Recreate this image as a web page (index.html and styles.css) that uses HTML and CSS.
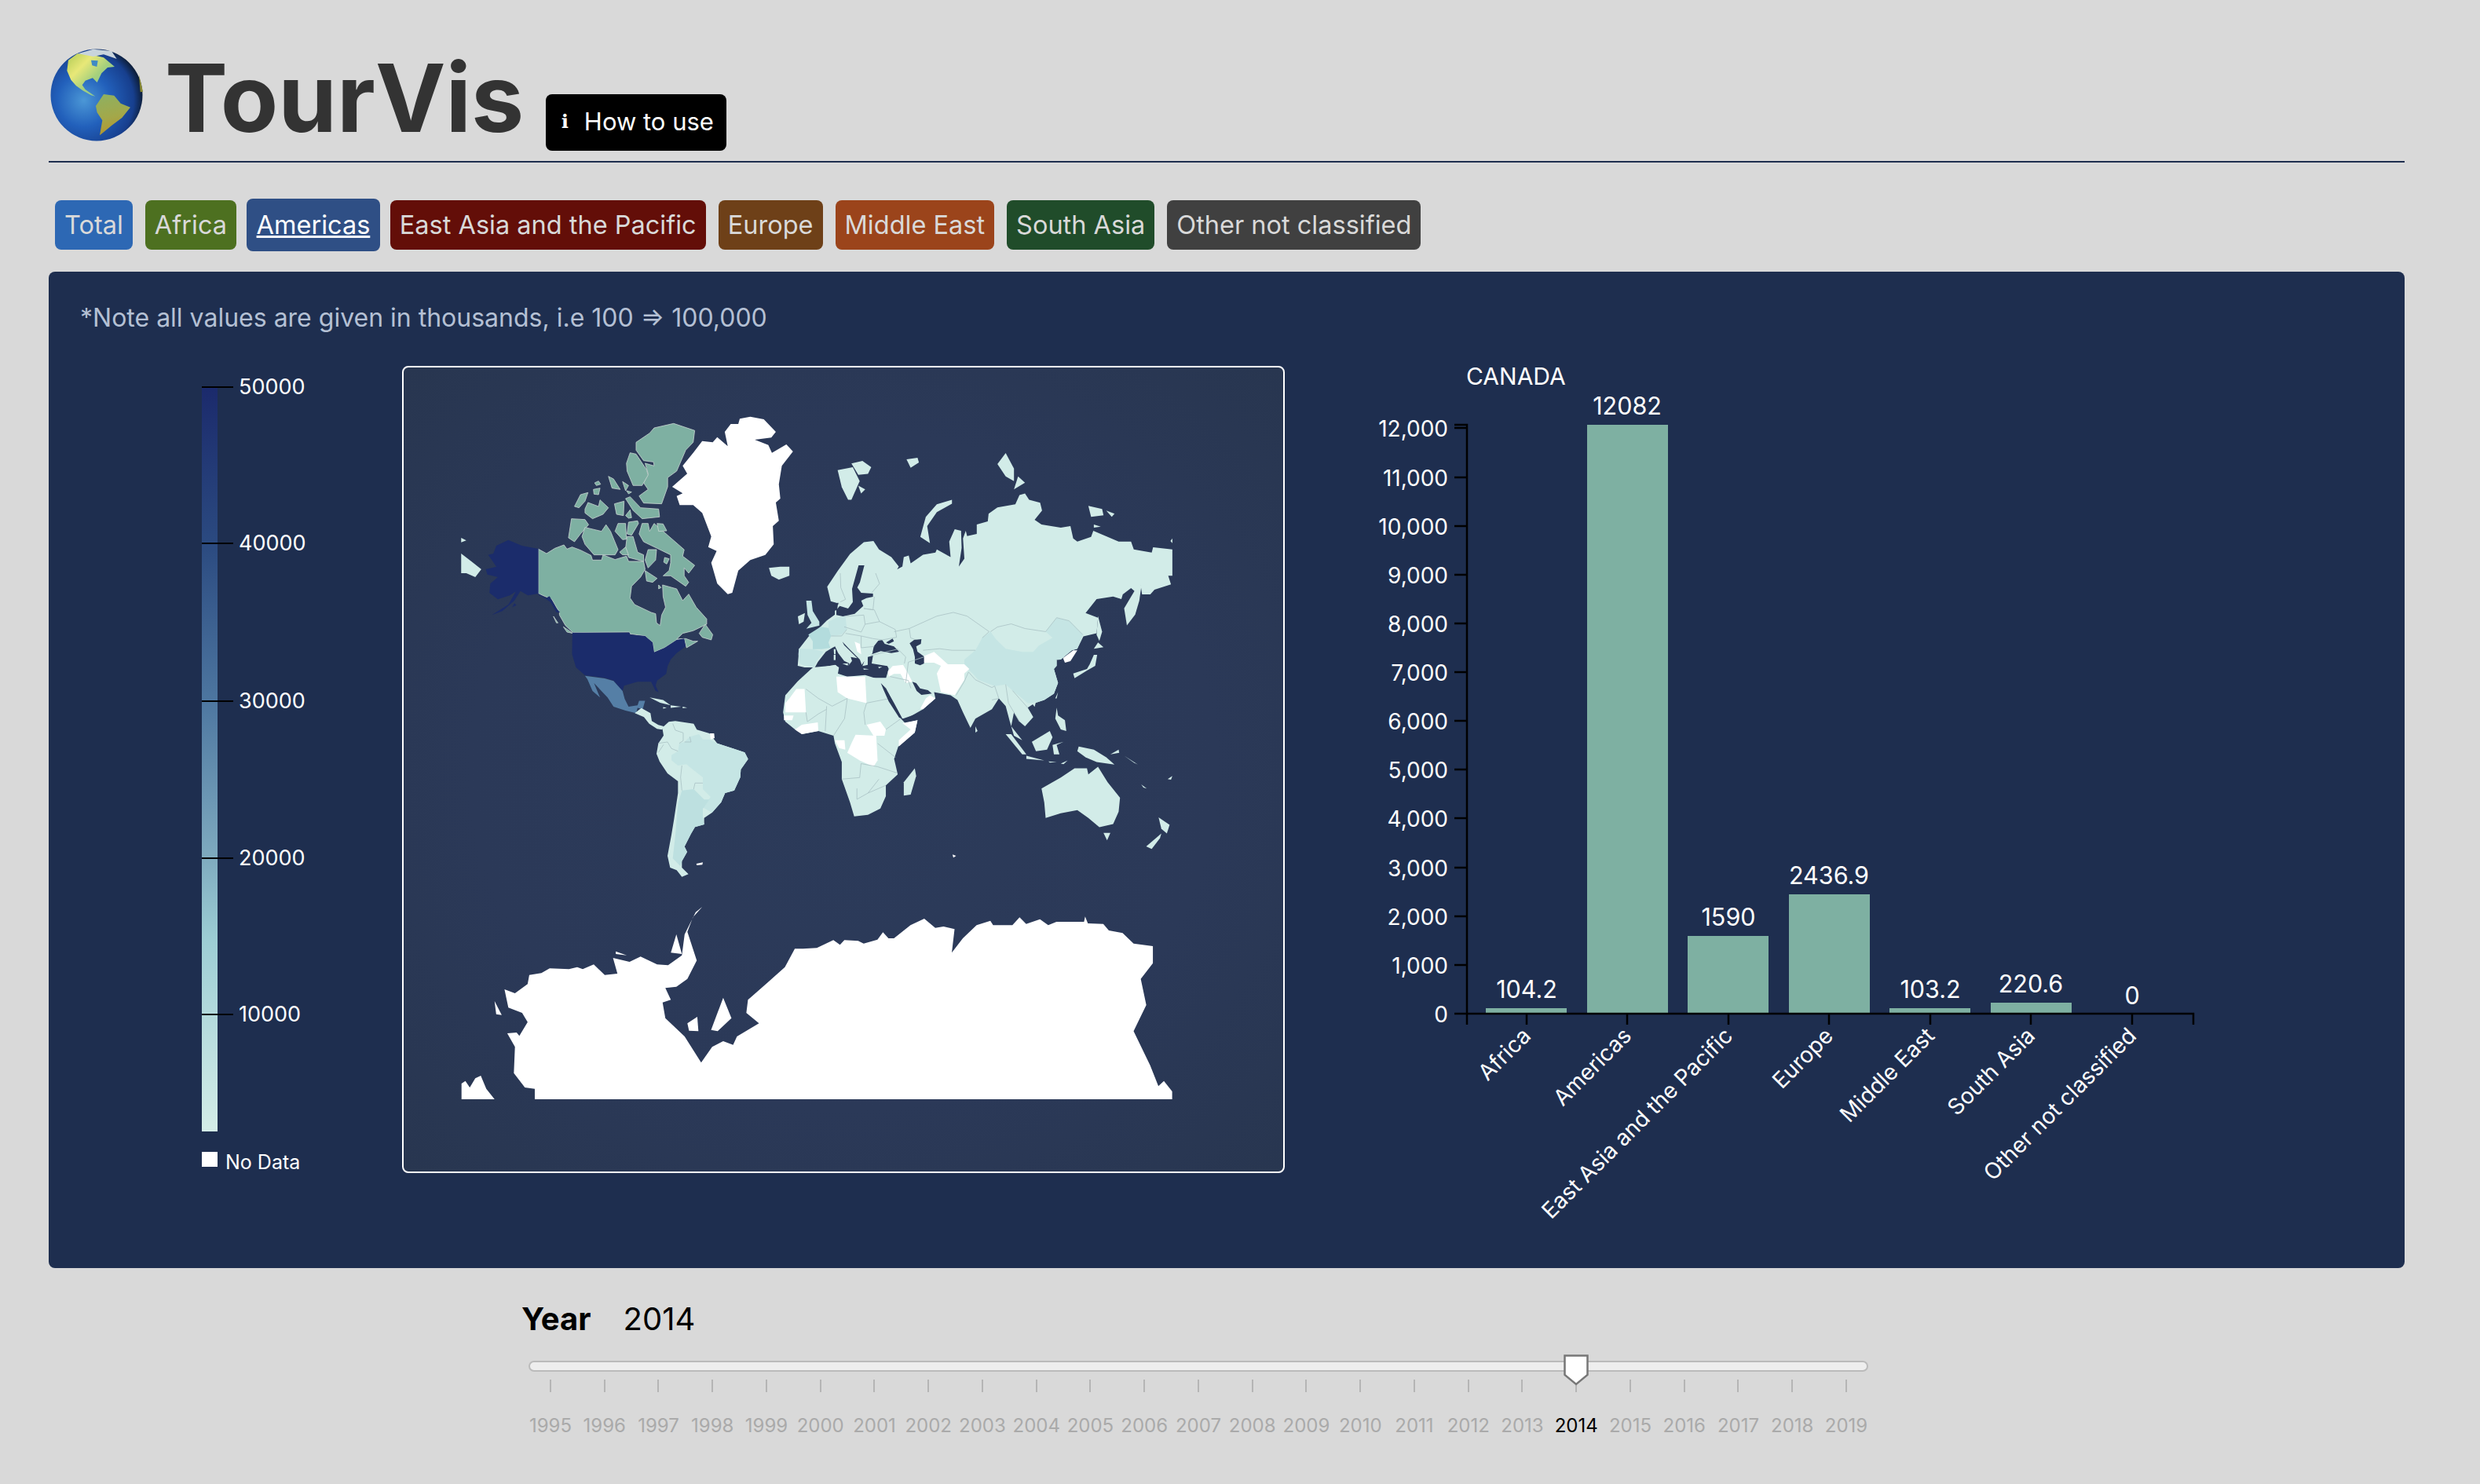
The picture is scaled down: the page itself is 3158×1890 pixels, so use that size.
FILE: index.html
```html
<!DOCTYPE html>
<html lang="en">
<head>
    <meta charset="UTF-8">
    <title>TourVis</title>
    <link rel="stylesheet" href="styles.css">
</head>
<body>
    <header class="header">
        <svg class="globe" viewBox="60 60 120 120">
            <defs>
                <radialGradient id="sphere" cx="36%" cy="56%" r="64%">
                    <stop offset="0" stop-color="#4b97d6"/>
                    <stop offset="0.45" stop-color="#2260bb"/>
                    <stop offset="0.85" stop-color="#173f8e"/>
                    <stop offset="1" stop-color="#0d1f3c"/>
                </radialGradient>
                <linearGradient id="landNorth" x1="0" y1="0.1" x2="0.9" y2="0.9">
                    <stop offset="0" stop-color="#b9cf5a"/>
                    <stop offset="0.3" stop-color="#e8e878"/>
                    <stop offset="0.6" stop-color="#a6d07c"/>
                    <stop offset="1" stop-color="#7fc4a0"/>
                </linearGradient>
                <linearGradient id="landSouth" x1="0.3" y1="0" x2="0.5" y2="1">
                    <stop offset="0" stop-color="#8fb060"/>
                    <stop offset="0.55" stop-color="#a3a84a"/>
                    <stop offset="1" stop-color="#b5942c"/>
                </linearGradient>
                <filter id="soft"><feGaussianBlur stdDeviation="0.4"/></filter>
            </defs>
            <circle cx="121" cy="121" r="58.5" fill="url(#sphere)"/>
            <g transform="translate(40 40) scale(0.3333)" filter="url(#soft)">
                <polygon fill="url(#landNorth)" points="135,110 170,85 220,88 270,100 312,135 285,138 262,160 245,195 228,178 200,188 188,205 200,222 238,248 222,244 190,226 165,208 145,185 130,150"/>
                <polygon fill="#3f8ac4" points="222,110 248,112 244,135 226,130"/>
                <polygon fill="url(#landSouth)" points="240,285 270,240 310,245 335,275 372,290 340,330 300,360 270,385 255,397 265,340 245,310"/>
                <polygon fill="#c8d4dc" points="172,85 230,68 300,75 320,105 270,88 230,96"/>
                <polygon fill="#8a8a30" points="405,165 420,230 410,232"/>
            </g>
        </svg>
        <h1 class="title">TourVis</h1>
        <button class="how-btn"><span class="info-icon">ℹ</span>How to use</button>
    </header>

    <nav class="tabs">
        <a class="tab tab-total">Total</a>
        <a class="tab tab-africa">Africa</a>
        <a class="tab tab-americas active">Americas</a>
        <a class="tab tab-eastasia">East Asia and the Pacific</a>
        <a class="tab tab-europe">Europe</a>
        <a class="tab tab-mideast">Middle East</a>
        <a class="tab tab-southasia">South Asia</a>
        <a class="tab tab-other">Other not classified</a>
    </nav>

    <section class="panel">
        <p class="note">*Note all values are given in thousands, i.e 100 ⇒ 100,000</p>
        <div class="charts">
            <svg class="legend" viewBox="240 440 272 1060">
                <defs>
                    <linearGradient id="ramp" x1="0" y1="0" x2="0" y2="1">
                        <stop offset="0" stop-color="#1b2a6c"/>
                        <stop offset="0.21" stop-color="#2b4a80"/>
                        <stop offset="0.42" stop-color="#4d76a0"/>
                        <stop offset="0.63" stop-color="#7eaabf"/>
                        <stop offset="0.74" stop-color="#9ccdd4"/>
                        <stop offset="1" stop-color="#d4ede8"/>
                    </linearGradient>
                </defs>
                <rect x="257" y="493" width="20" height="948" fill="url(#ramp)"/>
                <g class="legend-ticks">
                    <line x1="257" x2="297" y1="493" y2="493"/>
                    <line x1="257" x2="297" y1="692" y2="692"/>
                    <line x1="257" x2="297" y1="893" y2="893"/>
                    <line x1="257" x2="297" y1="1093" y2="1093"/>
                    <line x1="257" x2="297" y1="1292" y2="1292"/>
                </g>
                <g class="legend-text">
                    <text x="304" y="502">50000</text>
                    <text x="304" y="701">40000</text>
                    <text x="304" y="902">30000</text>
                    <text x="304" y="1102">20000</text>
                    <text x="304" y="1301">10000</text>
                </g>
                <rect x="257" y="1467" width="20" height="19" fill="#fff"/>
                <text class="legend-nodata" x="287" y="1489">No Data</text>
            </svg>

            <div class="map-card">
                <svg class="map" viewBox="514 468 1120 1024">
                    <!-- north america, coords read off the 500,450 crop -->
                    <g transform="translate(500 450) scale(0.3827 0.3333)">
                        <polygon class="nodata" points="1155,250 1190,242 1235,252 1275,300 1260,322 1205,330 1250,350 1262,380 1310,348 1332,375 1295,430 1285,500 1290,555 1275,570 1285,640 1265,660 1268,730 1240,770 1190,790 1150,830 1130,915 1115,920 1080,880 1060,800 1078,755 1050,740 1060,700 1030,610 1000,580 955,580 945,545 965,535 930,510 980,460 965,430 1000,380 1030,335 1065,340 1080,320 1115,355 1105,300 1125,270 1150,270"/>
                        <polygon class="low" points="1252,820 1290,815 1320,815 1320,850 1285,865 1260,850"/>
                        <polygon class="low" points="228,765 262,795 295,825 275,855 245,840 228,840"/>
                        <polygon class="low" points="228,705 245,715 228,722"/>
                        <g class="canada">
                            <polygon points="485,748 512,765 540,745 570,732 580,748 597,740 625,752 660,772 665,790 695,790 700,770 740,788 778,775 785,795 835,795 840,825 825,855 795,890 790,935 805,960 860,990 875,995 878,1030 890,1040 895,1000 908,970 900,930 898,885 945,900 965,945 985,920 1010,970 1045,1015 1045,1035 1000,1060 965,1070 945,1092 975,1090 1000,1100 1015,1100 978,1125 970,1090 945,1095 905,1125 870,1142 865,1105 840,1080 790,1072 788,1065 600,1067 575,1040 555,1000 555,990 530,940 510,930 485,918"/>
                            <polygon points="870,285 935,268 1005,295 1000,340 975,370 945,450 915,475 915,510 895,575 835,572 820,545 850,520 835,495 850,460 840,420 870,430 868,415 835,410 810,370 810,340 855,305"/>
                            <polygon points="790,380 810,385 845,445 850,465 830,505 800,505 780,450 778,420"/>
                            <polygon points="605,585 625,540 650,532 640,565 620,590"/>
                            <polygon points="640,595 650,570 685,585 690,560 718,590 700,615 665,632 640,610"/>
                            <polygon points="668,520 690,515 685,540 670,538"/>
                            <polygon points="672,495 685,488 692,500 678,505"/>
                            <polygon points="718,470 735,480 757,520 730,515"/>
                            <polygon points="765,490 785,505 775,525"/>
                            <polygon points="778,525 795,530 785,537"/>
                            <polygon points="738,575 770,565 768,620 745,615"/>
                            <polygon points="775,555 790,548 825,590 885,595 888,625 830,632 800,600"/>
                            <polygon points="775,620 790,598 795,628 785,630"/>
                            <polygon points="585,705 595,632 640,635 652,655 625,690 605,720"/>
                            <polygon points="630,700 640,665 695,680 710,655 725,680 750,750 740,770 670,770 640,730"/>
                            <polygon points="740,680 750,650 775,650 778,710 765,712"/>
                            <polygon points="780,690 785,645 815,640 818,650 795,695"/>
                            <polygon points="820,690 830,650 850,650 855,680 870,650 900,680 925,705 970,750 965,775 1005,810 985,840 970,820 970,850 985,875 975,890 925,850 900,850 920,830 925,800 925,770 880,745 835,720"/>
                            <polygon points="880,650 900,652 912,678 885,680"/>
                            <polygon points="780,700 800,700 815,760 835,770 835,795 785,780 775,745"/>
                            <polygon points="755,760 775,740 785,770 765,770"/>
                            <polygon points="850,750 878,750 875,790 850,820 840,790"/>
                            <polygon points="905,780 920,785 912,805 902,798"/>
                            <polygon points="840,830 880,860 865,875 845,870"/>
                            <polygon points="885,885 893,895 885,900"/>
                            <polygon points="1020,1070 1040,1035 1065,1075 1060,1095 1030,1085"/>
                            <polygon points="535,1005 550,1030 545,1030"/>
                            <polygon points="568,1045 600,1070 580,1065"/>
                        </g>
                        <g class="usa">
                            <polygon points="485,747 430,735 385,713 345,735 335,765 318,770 345,815 310,825 315,845 350,855 325,880 322,915 350,940 390,925 410,910 385,960 330,1000 365,985 405,945 425,908 450,925 485,918 510,935 522,928 545,975 557,990 545,990 525,950 505,935 485,922"/>
                            <polygon points="598,1067 788,1067 790,1075 840,1080 865,1105 870,1142 905,1125 945,1095 970,1090 975,1120 945,1145 925,1170 915,1195 910,1225 880,1250 875,1270 885,1295 875,1290 860,1255 815,1255 770,1270 765,1290 735,1250 705,1240 640,1230 610,1200 597,1150"/>
                            <polygon points="405,955 412,962 398,970"/>
                        </g>
                        <polygon class="mexico" points="640,1232 705,1242 735,1252 765,1290 772,1320 785,1350 815,1345 820,1328 840,1328 832,1360 815,1355 810,1375 775,1365 735,1350 715,1315 670,1260 690,1315 665,1290 648,1245"/>
                        <polygon class="low" points="855,1315 900,1325 925,1345 890,1335"/>
                        <polygon class="low" points="925,1345 960,1350 925,1355"/>
                        <polygon class="low" points="900,1352 912,1355 900,1358"/>
                        <polygon class="low" points="965,1350 980,1354 965,1356"/>
                    </g>

                    <!-- south america -->
                    <g transform="translate(800 890) scale(0.3333)">
                        <polygon class="low" points="25,55 50,35 85,55 90,85 115,100 135,105 130,118 110,115 80,95 60,70"/>
                        <polygon class="low" points="130,110 155,88 180,85 250,95 262,118 310,132 340,170 400,190 445,205 458,230 430,270 428,300 405,350 370,360 355,395 320,435 290,455 290,480 255,490 240,515 215,565 225,585 205,620 205,645 230,670 205,680 185,655 160,645 150,600 165,520 175,460 190,360 190,315 150,285 120,240 108,210 115,170 135,140"/>
                        <polygon class="mid" points="195,170 215,165 235,145 270,135 285,155 310,155 340,170 400,190 445,205 458,230 430,270 428,300 405,350 370,360 355,395 320,435 285,415 315,375 285,345 285,300 240,265 222,250 190,255 165,235 165,215 190,200"/>
                        <polygon class="high" points="205,350 250,345 290,385 310,385 285,420 285,450 290,480 255,490 240,515 215,565 225,585 205,620 200,640 170,610 180,520 190,400"/>
                        <polygon class="nodata" points="312,132 328,132 330,150 315,155"/>
                        <polygon class="nodata" points="260,630 285,625 283,634 262,636"/>
                        <polyline class="border" points="170,95 180,120 210,130 210,160 195,170"/>
                        <polyline class="border" points="235,145 240,165 215,165"/>
                        <polyline class="border" points="115,170 150,165 165,190 190,200"/>
                        <polyline class="border" points="115,205 135,175"/>
                        <polyline class="border" points="205,255 200,300 205,350"/>
                        <polyline class="border" points="250,345 255,322 285,322"/>
                    </g>

                    <!-- eurasia, africa, oceania -->
                    <g transform="translate(1000 500) scale(0.3508 0.3954)">
                        <polygon class="low" points="152,625 190,575 235,520 285,482 320,478 340,505 385,530 412,560 400,578 375,590 358,565 395,575 425,560 430,530 448,525 455,550 500,522 545,515 550,505 600,530 595,480 615,440 638,445 640,500 630,560 650,535 645,470 655,445 660,462 695,455 695,425 735,415 738,390 770,370 835,360 850,330 870,325 885,345 925,355 932,380 905,410 930,425 1000,435 1035,430 1045,470 1060,480 1110,465 1118,445 1210,480 1255,480 1265,505 1330,515 1335,498 1405,505 1405,590 1390,590 1400,618 1340,635 1325,650 1295,650 1290,620 1275,645 1255,630 1225,650 1220,665 1190,657 1130,665 1090,710 1135,725 1130,775 1082,785 1060,825 1040,830 1020,845 1000,860 960,862 985,850 985,880 975,890 990,935 975,970 940,990 905,1000 880,1015 900,1045 870,1075 850,1060 830,1030 820,1075 860,1120 830,1105 815,1060 800,1010 775,985 750,1020 690,1050 672,1080 645,1030 625,990 600,975 540,965 545,985 500,1020 440,1050 425,1050 395,1000 360,945 300,945 200,915 110,885 70,885 45,880 50,825 85,785 110,770 150,735 180,715 180,690 195,680 165,672"/>
                        <polygon class="mid" points="650,860 690,830 715,790 745,770 765,795 800,825 860,835 900,835 920,815 970,790 945,770 985,725 1030,735 1080,780 1060,825 1040,830 1020,845 1000,860 960,862 985,850 985,880 975,890 990,935 975,970 940,990 905,1000 880,1000 860,985 825,960 800,940 760,945 700,925 680,905 650,880"/>
                        <polygon class="nodata" points="500,850 540,835 590,875 650,875 668,890 650,905 650,925 625,960 615,975 565,965 550,905 565,880 540,870 500,870"/>
                        <polygon class="nodata" points="490,1018 510,985 525,975 545,985 500,1020"/>
                        <polygon class="nodata" points="1008,855 1045,830 1060,830 1035,865 1015,870"/>
                        <polyline class="border" points="395,770 450,760 455,790 485,800"/>
                        <polyline class="border" points="450,760 550,720 610,708 660,720 740,770 715,790"/>
                        <polyline class="border" points="745,770 770,755 820,745 870,760 945,770 985,725 1030,735 1080,780"/>
                        <polyline class="border" points="500,830 560,825 605,830 650,830 690,830"/>
                        <polyline class="border" points="620,975 650,930 665,900 690,925 750,950 760,945 775,985 750,990"/>
                        <polyline class="border" points="800,940 810,1000 850,1060"/>
                        <polyline class="border" points="825,960 850,985 880,1015"/>
                        <polygon class="low" points="190,250 245,240 270,285 240,345 228,345 205,305"/>
                        <polygon class="low" points="240,228 280,220 312,240 300,262 265,265"/>
                        <polygon class="low" points="265,300 290,312 275,325"/>
                        <polygon class="low" points="440,215 480,210 485,225 455,242"/>
                        <polygon class="low" points="490,465 510,400 550,360 605,345 605,358 550,385 515,430 525,485"/>
                        <polygon class="low" points="770,230 800,195 830,245 830,285 800,270"/>
                        <polygon class="low" points="845,270 870,290 830,312"/>
                        <polygon class="low" points="1100,365 1150,375 1155,395 1110,400"/>
                        <polygon class="low" points="1165,380 1195,390 1185,400"/>
                        <polygon class="low" points="1120,425 1145,432 1120,435"/>
                        <polygon class="low" points="1398,478 1405,470 1405,485"/>
                        <polygon class="low" points="1135,720 1150,770 1140,800 1130,780"/>
                        <polygon class="low" points="1120,825 1155,820 1135,805"/>
                        <polygon class="low" points="1045,905 1095,890 1105,875 1120,845 1132,845 1125,880 1095,895 1050,920"/>
                        <polygon class="low" points="1230,695 1280,620 1293,620 1285,670 1270,715 1240,750"/>
                        <polygon class="low" points="985,1015 990,1040 1015,1055 1020,1090 1000,1085 980,1050"/>
                        <polygon class="low" points="980,985 990,965 985,985"/>
                        <polygon class="low" points="895,1000 910,995 905,1012"/>
                        <polygon class="low" points="690,1075 698,1090 690,1095"/>
                        <polygon class="low" points="895,1125 960,1090 970,1110 950,1150 910,1155"/>
                        <polygon class="low" points="800,1100 820,1100 875,1165 860,1165"/>
                        <polygon class="low" points="875,1170 940,1185 875,1180"/>
                        <polygon class="low" points="970,1135 1010,1125 985,1135 995,1165 975,1165"/>
                        <polygon class="low" points="1065,1140 1120,1150 1165,1175 1195,1198 1130,1190 1090,1175 1060,1155"/>
                        <polygon class="low" points="1000,1195 1025,1185 1010,1197"/>
                        <polygon class="low" points="955,1188 985,1190 960,1192"/>
                        <polygon class="low" points="1180,1165 1210,1150 1212,1160"/>
                        <polygon class="low" points="1230,1170 1280,1198 1265,1192"/>
                        <polygon class="low" points="1292,1262 1312,1275 1300,1272"/>
                        <polygon class="low" points="1388,1245 1405,1235 1400,1247"/>
                        <polygon class="low" points="930,1275 1000,1240 1050,1210 1095,1210 1100,1230 1135,1205 1170,1255 1215,1305 1210,1350 1190,1390 1140,1400 1100,1370 1060,1345 1000,1355 945,1370 940,1320"/>
                        <polygon class="low" points="1155,1418 1180,1418 1168,1442"/>
                        <polygon class="low" points="1355,1368 1395,1392 1385,1420 1365,1405"/>
                        <polygon class="low" points="1365,1420 1310,1462 1330,1470 1360,1435"/>
                        <polygon class="low" points="430,1255 470,1210 475,1235 455,1295 430,1298"/>
                        <polygon class="nodata" points="607,1488 620,1492 610,1498"/>
                    </g>

                    <!-- europe and the seas that cut into the land -->
                    <g transform="translate(980 730) scale(0.3333)">
                        <polygon class="high2" points="148,235 195,205 228,210 235,240 225,265 232,285 200,290 165,290 165,260"/>
                        <polygon class="mid" points="225,185 255,170 290,165 295,215 275,235 235,240 225,210"/>
                        <polygon class="mid" points="112,288 165,290 195,297 205,300 180,335 170,360 130,352 115,345 110,310"/>
                        <polygon class="sea" points="170,365 185,338 215,300 240,285 250,280 262,305 285,335 305,345 300,355 315,335 310,320 335,325 285,275 278,262 300,285 345,330 352,350 362,335 355,355 375,350 375,320 395,315 390,345 450,355 455,365 445,400 370,400 365,395 330,410 260,390 265,360 250,350"/>
                        <polygon class="sea" points="340,-30 362,-30 345,35 335,55 350,75 395,78 395,90 370,95 350,105 358,125 325,155 280,165 255,160 255,140 268,125 300,135 318,110 315,60"/>
                        <polygon class="sea" points="245,125 262,112 258,140 245,145"/>
                        <polygon class="sea" points="393,305 398,280 415,258 430,255 440,270 475,280 495,300 465,305 425,298 390,310"/>
                        <polygon class="sea" points="445,265 470,250 475,260 455,270"/>
                        <polygon class="sea" points="535,268 552,255 580,252 578,270 560,280 565,300 590,318 590,345 575,352 555,345 555,320 548,290"/>
                        <polygon class="sea" points="545,415 560,420 575,440 605,447 620,460 605,462 580,465 562,450"/>
                        <polygon class="low" points="245,290 252,290 252,310 246,310"/>
                        <polygon class="low" points="245,312 252,312 252,332 245,332"/>
                        <polygon class="low" points="278,345 300,345 298,353"/>
                        <polygon class="low" points="358,364 380,367 360,369"/>
                        <polygon class="low" points="415,358 430,358 418,364"/>
                        <polygon class="mid" points="140,105 160,105 165,145 190,185 190,200 140,212 160,190 145,160"/>
                        <polygon class="low" points="108,165 135,152 130,185 112,195"/>
                        <polygon class="nodata" points="325,262 345,270 350,310 335,300"/>
                        <polygon class="nodata" points="452,375 470,355 510,350 530,385 545,415 520,420 500,385 475,385 455,395"/>
                        <polyline class="border" points="270,0 272,55 290,100 270,110"/>
                        <polyline class="border" points="405,0 420,40 390,75"/>
                        <polyline class="border" points="400,90 395,140 360,135"/>
                        <polyline class="border" points="290,165 360,160 365,195 350,225 285,205"/>
                        <polyline class="border" points="365,195 420,185 480,215 485,245 430,255 395,250 350,240 290,230"/>
                        <polyline class="border" points="360,135 400,140 420,185"/>
                        <polyline class="border" points="350,240 350,285 400,280"/>
                        <polyline class="border" points="385,315 490,290 520,320 515,345"/>
                        <polyline class="border" points="460,395 530,410 540,440"/>
                        <polyline class="border" points="520,420 530,340 590,320"/>
                        <polyline class="border" points="235,240 275,240 295,215"/>
                    </g>

                    <!-- africa goes over the mediterranean -->
                    <g transform="translate(1000 500) scale(0.3508 0.3954)">
                        <polygon class="low" points="45,930 100,885 185,878 190,905 225,915 290,910 345,925 355,920 385,1000 420,1050 435,1065 480,1055 470,1095 410,1140 395,1180 408,1230 365,1265 365,1300 345,1340 300,1360 250,1365 235,1320 205,1245 205,1190 180,1130 175,1105 120,1090 60,1100 35,1085 0,1060 -8,1030 0,975"/>
                        <polygon class="nodata" points="185,915 225,915 290,915 295,1000 225,985 190,965"/>
                        <polygon class="nodata" points="0,1030 75,1030 70,955 40,955 15,985 0,1000"/>
                        <polygon class="nodata" points="-5,1040 30,1040 25,1055 -5,1055"/>
                        <polygon class="nodata" points="35,1085 60,1070 118,1062 120,1090 60,1100"/>
                        <polygon class="nodata" points="295,1070 345,1060 365,1085 360,1105 320,1105"/>
                        <polygon class="nodata" points="255,1102 330,1105 335,1185 320,1205 270,1185 225,1160 240,1130"/>
                        <polygon class="nodata" points="180,1120 215,1120 218,1150 195,1145"/>
                        <polygon class="nodata" points="425,1065 480,1055 470,1095 412,1140 412,1120 455,1085"/>
                        <polyline class="border" points="295,1000 380,985"/>
                        <polyline class="border" points="295,1000 285,1030 290,1070"/>
                        <polyline class="border" points="225,985 170,1010 120,985 75,955"/>
                        <polyline class="border" points="150,1010 145,1090"/>
                        <polyline class="border" points="225,985 215,1050 175,1105"/>
                        <polyline class="border" points="75,1030 80,1060 120,1035 150,1020"/>
                        <polyline class="border" points="365,1085 420,1050"/>
                        <polyline class="border" points="335,1130 400,1175"/>
                        <polyline class="border" points="205,1245 270,1240 275,1195 335,1205 405,1225"/>
                        <polyline class="border" points="260,1275 260,1310 300,1290 365,1265"/>
                        <polyline class="border" points="300,1290 340,1245"/>
                    </g>
                    <g transform="translate(980 730) scale(0.3333)">
                        <polygon class="sea" points="425,420 445,440 470,490 505,555 495,552 455,490 435,445"/>
                        <polygon class="sea" points="510,556 570,535 530,565 505,560"/>
                    </g>

                    <!-- antarctica -->
                    <g class="nodata" transform="translate(500 1100) scale(0.7015 0.3333)">
                        <polygon points="258,900 258,860 240,855 220,800 222,700 208,648 225,645 230,658 245,605 235,570 210,550 203,480 222,495 245,460 248,425 270,418 285,400 320,403 335,395 345,403 365,385 385,425 408,420 400,360 430,375 450,355 480,385 500,388 525,350 530,270 550,185 562,165 545,205 535,260 552,370 535,440 515,470 495,475 505,520 490,530 495,590 530,660 560,760 580,700 600,678 618,692 625,660 665,610 642,570 645,520 680,455 712,395 730,325 745,325 770,322 800,292 812,310 820,292 845,295 855,305 880,290 890,262 900,285 910,285 940,235 965,210 985,245 1000,240 1020,250 1015,340 1035,285 1060,235 1085,218 1090,235 1125,235 1138,205 1150,230 1175,212 1190,235 1205,222 1255,222 1257,202 1262,228 1290,230 1300,255 1325,265 1345,305 1380,315 1380,380 1358,440 1368,540 1345,640 1375,770 1390,850 1400,830 1415,870 1415,900"/>
                        <polygon points="125,900 125,840 132,830 140,855 150,820 160,810 170,860 185,900"/>
                        <polygon points="185,525 198,578 188,575"/>
                        <polygon points="515,270 525,345 505,340"/>
                        <polygon points="535,610 553,585 555,640 538,638"/>
                        <polygon points="600,512 615,590 590,640 578,635"/>
                        <polygon points="405,335 425,350 405,345"/>
                    </g>
                </svg>
            </div>

            <svg class="bars" viewBox="1696 440 1154 1130">
                <text class="bar-title" x="1867" y="490">CANADA</text>
                <rect class="bar" x="1892" y="1284" width="103" height="7"/>
                <rect class="bar" x="2021" y="541" width="103" height="750"/>
                <rect class="bar" x="2149" y="1192" width="103" height="99"/>
                <rect class="bar" x="2278" y="1139" width="103" height="152"/>
                <rect class="bar" x="2406" y="1284" width="103" height="7"/>
                <rect class="bar" x="2535" y="1277" width="103" height="14"/>
                <g class="bar-value">
                    <text x="1944" y="1271">104.2</text>
                    <text x="2072" y="528">12082</text>
                    <text x="2201" y="1179">1590</text>
                    <text x="2329" y="1126">2436.9</text>
                    <text x="2458" y="1271">103.2</text>
                    <text x="2586" y="1264">220.6</text>
                    <text x="2715" y="1279">0</text>
                </g>
                <path class="axis" d="M1852,541H1868V1291M1868,1305V1291H2793V1305"/>
                <path class="axis" d="M1852,1291H1868M1852,1229H1868M1852,1167H1868M1852,1105H1868M1852,1042H1868M1852,980H1868M1852,918H1868M1852,856H1868M1852,794H1868M1852,732H1868M1852,670H1868M1852,608H1868M1852,545H1868"/>
                <path class="axis" d="M1944,1291V1305M2072,1291V1305M2201,1291V1305M2329,1291V1305M2458,1291V1305M2586,1291V1305M2715,1291V1305"/>
                <g class="y-labels">
                    <text x="1844" y="1302">0</text>
                    <text x="1844" y="1240">1,000</text>
                    <text x="1844" y="1178">2,000</text>
                    <text x="1844" y="1116">3,000</text>
                    <text x="1844" y="1053">4,000</text>
                    <text x="1844" y="991">5,000</text>
                    <text x="1844" y="929">6,000</text>
                    <text x="1844" y="867">7,000</text>
                    <text x="1844" y="805">8,000</text>
                    <text x="1844" y="743">9,000</text>
                    <text x="1844" y="681">10,000</text>
                    <text x="1844" y="619">11,000</text>
                    <text x="1844" y="556">12,000</text>
                </g>
                <g class="x-labels">
                    <text transform="translate(1951 1321) rotate(-45)">Africa</text>
                    <text transform="translate(2079 1321) rotate(-45)">Americas</text>
                    <text transform="translate(2208 1321) rotate(-45)">East Asia and the Pacific</text>
                    <text transform="translate(2336 1321) rotate(-45)">Europe</text>
                    <text transform="translate(2465 1321) rotate(-45)">Middle East</text>
                    <text transform="translate(2593 1321) rotate(-45)">South Asia</text>
                    <text transform="translate(2722 1321) rotate(-45)">Other not classified</text>
                </g>
            </svg>
        </div>
    </section>

    <section class="year-box">
        <div class="year-head"><b>Year</b><span>2014</span></div>
        <div class="slider">
            <div class="track"></div>
            <svg class="handle" viewBox="0 0 32 40"><path d="M1.5,1.5H30.5V26L16,38L1.5,26Z"/></svg>
            <div class="marks">
                <div class="mark"><i></i><span>1995</span></div>
                <div class="mark"><i></i><span>1996</span></div>
                <div class="mark"><i></i><span>1997</span></div>
                <div class="mark"><i></i><span>1998</span></div>
                <div class="mark"><i></i><span>1999</span></div>
                <div class="mark"><i></i><span>2000</span></div>
                <div class="mark"><i></i><span>2001</span></div>
                <div class="mark"><i></i><span>2002</span></div>
                <div class="mark"><i></i><span>2003</span></div>
                <div class="mark"><i></i><span>2004</span></div>
                <div class="mark"><i></i><span>2005</span></div>
                <div class="mark"><i></i><span>2006</span></div>
                <div class="mark"><i></i><span>2007</span></div>
                <div class="mark"><i></i><span>2008</span></div>
                <div class="mark"><i></i><span>2009</span></div>
                <div class="mark"><i></i><span>2010</span></div>
                <div class="mark"><i></i><span>2011</span></div>
                <div class="mark"><i></i><span>2012</span></div>
                <div class="mark"><i></i><span>2013</span></div>
                <div class="mark current"><i></i><span>2014</span></div>
                <div class="mark"><i></i><span>2015</span></div>
                <div class="mark"><i></i><span>2016</span></div>
                <div class="mark"><i></i><span>2017</span></div>
                <div class="mark"><i></i><span>2018</span></div>
                <div class="mark"><i></i><span>2019</span></div>
            </div>
        </div>
    </section>
</body>
</html>
```

FILE: styles.css
```css
* {
    box-sizing: border-box;
}
body {
    margin: 0;
    padding: 60px 96px 20px 62px;
    background-color: #d9d9d9;
    font-family: Inter, "Liberation Sans", sans-serif;
}

/* header */
.header {
    display: flex;
    align-items: flex-end;
    height: 147px;
    padding-bottom: 13px;
    border-bottom: 2px solid #1e2e4f;
}
.globe {
    width: 120px;
    height: 120px;
    margin-bottom: 12px;
}
.title {
    margin: 0 27.5px 2px 28px;
    font-size: 120px;
    line-height: 130px;
    font-weight: 700;
    color: #333;
}
.how-btn {
    display: flex;
    align-items: center;
    height: 72px;
    width: 230px;
    padding: 0 0 3px 20px;
    border: none;
    border-radius: 8px;
    background: #000;
    color: #fff;
    font: 31px Inter, sans-serif;
}
.info-icon {
    font: bold 24px "DejaVu Serif", "DejaVu Sans", serif;
    margin-right: 20px;
}

/* region tabs */
.tabs {
    display: flex;
    gap: 16px;
    margin: 48px 0 28px 8px;
}
.tab {
    display: block;
    height: 63px;
    padding: 0 12px;
    border-radius: 8px;
    font-size: 32.5px;
    line-height: 63px;
    color: #d9d9d9;
}
.tab-total { background: #2d68b4; }
.tab-africa { background: #4d7020; }
.tab-americas { background: #2f4f85; }
.tab-eastasia { background: #630e08; }
.tab-europe { background: #6e4018; }
.tab-mideast { background: #9b441b; }
.tab-southasia { background: #204c2a; }
.tab-other { background: #404040; }
.tab.active {
    height: 67px;
    margin: -2px -3.5px;
    padding: 2px 13px;
    color: #fff;
    text-decoration: underline;
}

/* main panel */
.panel {
    height: 1269px;
    padding: 39px 0 0 40px;
    border-radius: 8px;
    background: #1e2e4f;
}
.note {
    margin: 0 0 15px;
    font-size: 32px;
    line-height: 40px;
    color: #b4c0d4;
}
.charts {
    display: flex;
    align-items: flex-start;
    margin-left: 138px;
}
.legend {
    width: 272px;
    height: 1060px;
}
.legend-ticks line {
    stroke: #000;
    stroke-width: 2;
}
.legend-text text {
    font-size: 27px;
    fill: #fff;
}
.legend-nodata {
    font-size: 25px;
    fill: #fff;
}
.map-card {
    width: 1124px;
    height: 1028px;
    margin-top: 26px;
    border: 2px solid #fff;
    border-radius: 8px;
    background: radial-gradient(ellipse at center, #2c3b5a 0%, #2b3958 60%, #283650 100%);
}
.map {
    display: block;
    width: 1120px;
    height: 1024px;
}
.map polygon {
    stroke-linejoin: round;
}
.nodata { fill: #fff; }
.low { fill: #d2ece8; }
.mid { fill: #c5e5e4; }
.high { fill: #bde0e0; }
.high2 { fill: #b3dcdd; }
.mexico { fill: #557fa6; }
.usa { fill: #1b2c6b; }
.sea { fill: #2b3958; }
.canada polygon {
    fill: #7eb0a2;
    stroke: #c9d6d2;
    stroke-width: 0.8px;
    vector-effect: non-scaling-stroke;
}
.border {
    fill: none;
    stroke: #a9c2c4;
    stroke-width: 0.8px;
    vector-effect: non-scaling-stroke;
}

/* bar chart */
.bars {
    width: 1154px;
    height: 1130px;
    margin-left: 60px;
}
.bar { fill: #7eb0a2; }
.axis {
    fill: none;
    stroke: #000;
    stroke-width: 2.5;
}
.bars text {
    font-size: 28px;
    fill: #fff;
}
.bars .bar-title {
    font-size: 30px;
}
.bars .bar-value text {
    font-size: 30.5px;
    text-anchor: middle;
}
.y-labels text { text-anchor: end; }
.bars .x-labels text {
    font-size: 28.3px;
    text-anchor: end;
}

/* year slider */
.year-box {
    margin: 42px 0 0 604.6px;
}
.year-head {
    display: flex;
    gap: 41px;
    margin-left: -2.6px;
    font-size: 40px;
    line-height: 46px;
    color: #000;
}
.slider {
    position: relative;
    width: 1718.75px;
    margin-top: 30px;
}
.track {
    height: 14px;
    margin: 0 6.4px;
    border: 2px solid #bbb;
    border-radius: 7px;
    background: #eee;
}
.handle {
    position: absolute;
    left: 1324px;
    top: -8px;
    width: 32px;
    height: 40px;
}
.handle path {
    fill: #fff;
    stroke: #777;
    stroke-width: 2.5;
}
.marks {
    display: flex;
    margin-top: 10px;
}
.mark {
    display: flex;
    flex-direction: column;
    align-items: center;
    width: 68.75px;
    font-size: 24px;
    line-height: 30px;
    color: #aaa;
}
.mark i {
    display: block;
    width: 2px;
    height: 16px;
    margin-bottom: 28px;
    background: #b5b5b5;
}
.mark.current { color: #000; }
```
